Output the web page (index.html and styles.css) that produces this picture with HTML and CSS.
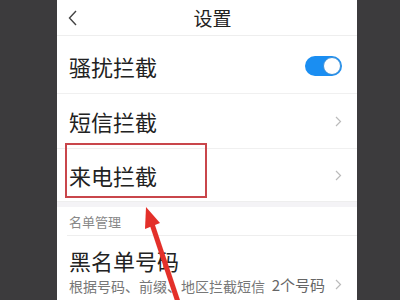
FILE: index.html
```html
<!DOCTYPE html>
<html>
<head>
<meta charset="utf-8">
<link rel="stylesheet" href="styles.css">
</head>
<body>
<div class="screen">
  <div class="header">
    <div class="back">
      <svg width="9" height="16" viewBox="0 0 9 16"><polyline points="8,1 1.5,8 8,15" fill="none" stroke="#444" stroke-width="1.4"/></svg>
    </div>
    <div class="title">设置</div>
    <div></div>
  </div>
  <div class="row row1">
    <span class="label">骚扰拦截</span>
    <span class="toggle"><span class="knob"></span></span>
  </div>
  <div class="row row2">
    <span class="label">短信拦截</span>
    <svg class="chev" width="7" height="11" viewBox="0 0 7 11"><polyline points="1,1 5.5,5.5 1,10" fill="none" stroke="#bbb" stroke-width="1.2"/></svg>
  </div>
  <div class="row row3">
    <span class="label">来电拦截</span>
    <svg class="chev" width="7" height="11" viewBox="0 0 7 11"><polyline points="1,1 5.5,5.5 1,10" fill="none" stroke="#bbb" stroke-width="1.2"/></svg>
  </div>
  <div class="gap"></div>
  <div class="section">名单管理</div>
  <div class="row4">
    <div class="label">黑名单号码</div>
    <div class="subline">
      <span class="sub">根据号码、前缀、地区拦截短信</span>
      <span class="value">2个号码
        <svg class="chev" width="7" height="11" viewBox="0 0 7 11"><polyline points="1,1 5.5,5.5 1,10" fill="none" stroke="#bbb" stroke-width="1.2"/></svg>
      </span>
    </div>
  </div>
  <div class="highlight"></div>
  <svg class="arrow" width="300" height="300" viewBox="0 0 300 300">
    <line x1="122" y1="305" x2="95" y2="224" stroke="#e3302a" stroke-width="5"/>
    <polygon points="89,207 103,223 88,229" fill="#e3302a"/>
  </svg>
</div>
</body>
</html>
```
FILE: styles.css
```css
* { box-sizing: border-box; }
html, body { margin: 0; padding: 0; }
body {
  background: #3c3b3d;
  width: 400px;
  height: 300px;
  overflow: hidden;
  font-family: "Noto Sans CJK SC", "Noto Sans", sans-serif;
  color: #222;
}
.screen {
  position: relative;
  margin-left: 57px;
  width: 300px;
  height: 300px;
  background: #fff;
  overflow: hidden;
}
.header {
  height: 36px;
  border-bottom: 1px solid #eeeeee;
  display: grid;
  grid-template-columns: 1fr auto 1fr;
  align-items: center;
  padding-left: 11px;
}
.back { display: flex; align-items: center; }
.title { font-size: 19px; line-height: 24px; color: #222; }
.row {
  display: flex;
  align-items: center;
  justify-content: space-between;
  padding: 0 15px 0 12px;
  border-bottom: 1px solid #f0f0f0;
}
.label { font-size: 22px; line-height: 26px; }
.row1 { height: 58px; padding-top: 3px; }
.row2 { height: 55px; }
.row3 { height: 53px; border-bottom: 1px solid #eeeeee; }
.toggle {
  width: 37px;
  height: 20px;
  border-radius: 10px;
  background: #1a8ef2;
  display: flex;
  justify-content: flex-end;
  align-items: center;
  padding-right: 1px;
}
.knob {
  width: 18px;
  height: 18px;
  border-radius: 50%;
  background: #fff;
  border: 1px solid #3d8fd6;
}
.gap { height: 5px; background: #f4f3f6; }
.section {
  height: 29px;
  margin-left: 10px;
  padding-left: 2px;
  border-bottom: 1px solid #eeeeee;
  font-size: 13px;
  color: #888;
  display: flex;
  align-items: center;
}
.row4 { padding: 11px 15px 0 12px; }
.subline {
  display: flex;
  justify-content: space-between;
  align-items: center;
  margin-top: 3px;
}
.sub { font-size: 14px; color: #777; line-height: 20px; }
.value {
  font-size: 15px;
  color: #666;
  display: flex;
  align-items: center;
  gap: 10px;
  margin-top: -4px;
}
.highlight {
  position: absolute;
  left: 8px;
  top: 143px;
  width: 142px;
  height: 55px;
  border: 2.5px solid #c9464b;
}
.arrow { position: absolute; left: 0; top: 0; }
```
